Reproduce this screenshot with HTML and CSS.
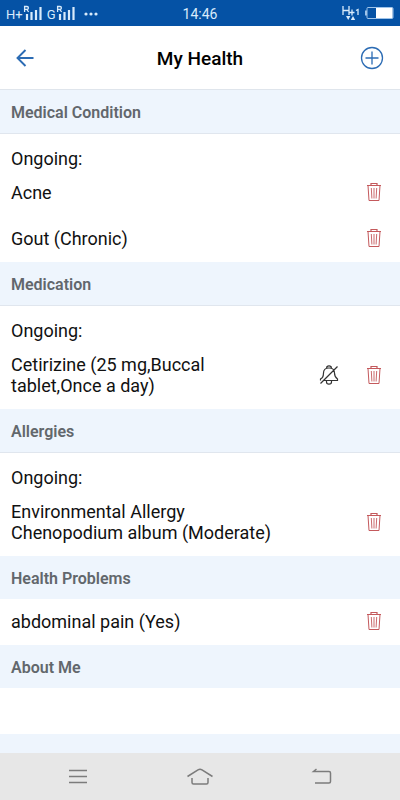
FILE: index.html
```html
<!DOCTYPE html>
<html lang="en">
<head>
<meta charset="utf-8">
<meta name="viewport" content="width=device-width, initial-scale=1">
<title>My Health</title>
<link rel="stylesheet" href="styles.css">
</head>
<body>
<svg class="defs" aria-hidden="true">
  <symbol id="trash" viewBox="0 0 16 20">
    <g fill="none" stroke="currentColor">
      <path d="M1 3.5H15M5 3.5V1.5H11V3.5" stroke-width="1.2"/>
      <path d="M2 3.5L3 18.5H13L14 3.5" stroke-width="1"/>
      <path d="M5.3 6L5.9 16.500M8 6V16.500M10.700 6L10.100 16.500" stroke-width=".9"/>
    </g>
  </symbol>
  <symbol id="signal" viewBox="0 0 20 16">
    <g fill="none" stroke="currentColor">
      <path d="M1.600 7V1.500H4Q5.400 1.500 5.400 2.900Q5.400 4.300 4 4.300H1.600M3.800 4.300L5.600 7" stroke-width="1.300"/>
      <path d="M4 9V15M8.500 7V15M13 5V15M17.500 2V15" stroke-width="2.200"/>
    </g>
  </symbol>
</svg>
<div class="screen">
  <div class="status">
    <div class="status-left">
      <span>H+</span><svg class="signal"><use href="#signal"/></svg>
      <span class="network">G</span><svg class="signal"><use href="#signal"/></svg>
      <svg class="dots" viewBox="0 0 14 4" fill="currentColor"><circle cx="2" cy="2" r="1.6"/><circle cx="7" cy="2" r="1.6"/><circle cx="12" cy="2" r="1.6"/></svg>
    </div>
    <time>14:46</time>
    <div class="status-right">
      <svg class="data" viewBox="0 0 18 16" fill="none" stroke="currentColor"><path d="M1 1V10M7 1V10M1 5.500H7M6.500 7.500H12.500M10 4.500V10.500M14 5.500L16 4.500V10" stroke-width="1.300"/><path d="M4 11H8.400L6.200 15ZM8.800 15H13.200L11 11Z" fill="currentColor" stroke="none"/></svg>
      <svg class="battery" viewBox="0 0 30 12"><path d="M3 3.500H1V8.500H3" fill="#9fc4ea"/><rect x="3" y="0.500" width="26" height="11" rx="1" fill="#0552a5" stroke="#9fc4ea"/><rect x="12" y="1" width="16.500" height="10" fill="#fff"/></svg>
    </div>
  </div>
  <header class="header">
    <button class="icon-button back-button" aria-label="Back"><svg class="back" viewBox="0 0 18 18" fill="none" stroke="currentColor" stroke-width="1.900"><path d="M17.500 9H1.500M9.500 1L1.500 9L9.500 17"/></svg></button>
    <h1>My Health</h1>
    <button class="icon-button" aria-label="Add"><svg class="add" viewBox="0 0 24 24" fill="none" stroke="currentColor" stroke-width="1.300"><circle cx="12" cy="12" r="10.500"/><path d="M12 5.500V18.500M5.500 12H18.500"/></svg></button>
  </header>
  <main>
    <section>
      <h2 class="lined">Medical Condition</h2>
      <h3>Ongoing:</h3>
      <div class="row"><p>Acne</p><button class="icon-button delete" aria-label="Delete Acne"><svg class="trash"><use href="#trash"/></svg></button></div>
      <div class="row"><p>Gout (Chronic)</p><button class="icon-button delete" aria-label="Delete Gout"><svg class="trash"><use href="#trash"/></svg></button></div>
    </section>
    <section>
      <h2 class="lined">Medication</h2>
      <h3>Ongoing:</h3>
      <div class="row">
        <p>Cetirizine (25 mg,Buccal tablet,Once a day)</p>
        <button class="icon-button mute" aria-label="Reminder off"><svg class="bell" viewBox="0 0 20 22" fill="none" stroke="currentColor" stroke-width="1.200"><path d="M7.700 4V3Q10 .6 12.300 3V4M3.500 13.500Q4.500 11.500 4.500 9Q4.500 4 10 4Q15.500 4 15.500 9Q15.500 13 18.500 15V16.500H5M3.500 13.500L1.500 15V16.500M7.500 16.500V18Q7.500 20.200 10 20.200Q12.500 20.200 12.500 18V16.500M1.500 19.500L18.500 2.500"/></svg></button>
        <button class="icon-button delete" aria-label="Delete Cetirizine"><svg class="trash"><use href="#trash"/></svg></button>
      </div>
    </section>
    <section>
      <h2 class="lined">Allergies</h2>
      <h3>Ongoing:</h3>
      <div class="row"><p>Environmental Allergy<br>Chenopodium album (Moderate)</p><button class="icon-button delete" aria-label="Delete Environmental Allergy"><svg class="trash"><use href="#trash"/></svg></button></div>
    </section>
    <section>
      <h2>Health Problems</h2>
      <div class="row"><p>abdominal pain (Yes)</p><button class="icon-button delete" aria-label="Delete abdominal pain"><svg class="trash"><use href="#trash"/></svg></button></div>
    </section>
    <section>
      <h2>About Me</h2>
      <div class="row"></div>
    </section>
  </main>
  <nav class="nav" aria-label="System">
    <button class="icon-button" aria-label="Menu"><svg viewBox="0 0 28 18"><path d="M5 2.500H23M5 8.500H23M5 14.500H23"/></svg></button>
    <button class="icon-button" aria-label="Home"><svg viewBox="0 0 28 18"><path d="M1.500 8.500L12 1.800Q14 .6 16 1.800L26.500 8.500M6 10V14.500Q6 16 7.500 16H20.500Q22 16 22 14.500V10"/></svg></button>
    <button class="icon-button" aria-label="Go back"><svg viewBox="0 0 28 18"><path d="M8.500 1L5.500 3.500H21Q22.500 3.500 22.500 5V13.500Q22.500 15 21 15H7"/></svg></button>
  </nav>
</div>
</body>
</html>
```
FILE: styles.css
```css
* {
  box-sizing: border-box;
}

body {
  margin: 0;
  background: #eef5fd;
  color: #111;
  font: 18px/21px Roboto, sans-serif;
}

h1, h2, h3, p {
  margin: 0;
}

svg {
  display: block;
  flex: none;
}

.defs {
  position: absolute;
  width: 0;
  height: 0;
}

.screen {
  display: flex;
  flex-direction: column;
  min-height: 100vh;
}

.status {
  display: grid;
  grid-template-columns: 1fr auto 1fr;
  align-items: center;
  height: 26px;
  padding: 0 6px;
  background: #0552a5;
  color: #d9ebfb;
  font-size: 13px;
}

.status time {
  padding-top: 2px;
  font-size: 14px;
}

.status-left,
.status-right {
  display: flex;
  align-items: center;
}

.status-left span {
  padding-top: 2px;
}

.status-right {
  justify-content: flex-end;
  gap: 4px;
}

.status .network {
  margin-left: 4px;
}

.signal {
  width: 20px;
  height: 16px;
}

.dots {
  width: 14px;
  height: 4px;
  margin: 2px 0 0 8px;
}

.data {
  width: 18px;
  height: 16px;
}

.battery {
  width: 30px;
  height: 12px;
}

.icon-button {
  display: flex;
  align-items: center;
  justify-content: center;
  flex: none;
  padding: 0;
  border: 0;
  background: none;
  color: inherit;
}

.header {
  display: flex;
  align-items: center;
  justify-content: space-between;
  height: 64px;
  padding: 1px 12px 0;
  border-bottom: 1px solid #dfe5ec;
  background: #fff;
}

.header .icon-button {
  width: 32px;
  height: 32px;
  color: #2c6cb4;
}

.header .back-button {
  justify-content: flex-start;
  padding-left: 4px;
}

.header h1 {
  color: #000;
  font-size: 19px;
  font-weight: 500;
}

.back {
  width: 18px;
  height: 18px;
}

.add {
  width: 24px;
  height: 24px;
}

main {
  flex: 1;
}

section {
  background: #fff;
}

h2 {
  padding: 12px 11px 10px;
  background: #eef5fd;
  color: #62676c;
  font-size: 16px;
  font-weight: 600;
  line-height: 21px;
}

.lined {
  border-bottom: 1px solid #e0e6ee;
}

h3 {
  height: 36px;
  padding: 14px 11px 0;
  font-size: 18px;
  font-weight: 400;
}

.row {
  display: flex;
  align-items: center;
  min-height: 46px;
  padding: 0 10px 0 11px;
}

.row p {
  flex: 1;
  max-width: 300px;
  padding: 12px 0 13px;
}

.row .icon-button {
  padding-bottom: 2px;
}

.delete {
  width: 32px;
  margin-left: auto;
  color: #c4595c;
}

.trash {
  width: 16px;
  height: 20px;
}

.mute {
  width: 24px;
  margin: 0 17px 0 88px;
  color: #333;
}

.bell {
  width: 20px;
  height: 22px;
}

.nav {
  display: flex;
  justify-content: space-between;
  align-items: center;
  height: 47px;
  padding: 0 64px;
  background: #e7e7e7;
}

.nav svg {
  width: 28px;
  height: 18px;
  fill: none;
  stroke: #7c7c7c;
  stroke-width: 1.5;
}
```
